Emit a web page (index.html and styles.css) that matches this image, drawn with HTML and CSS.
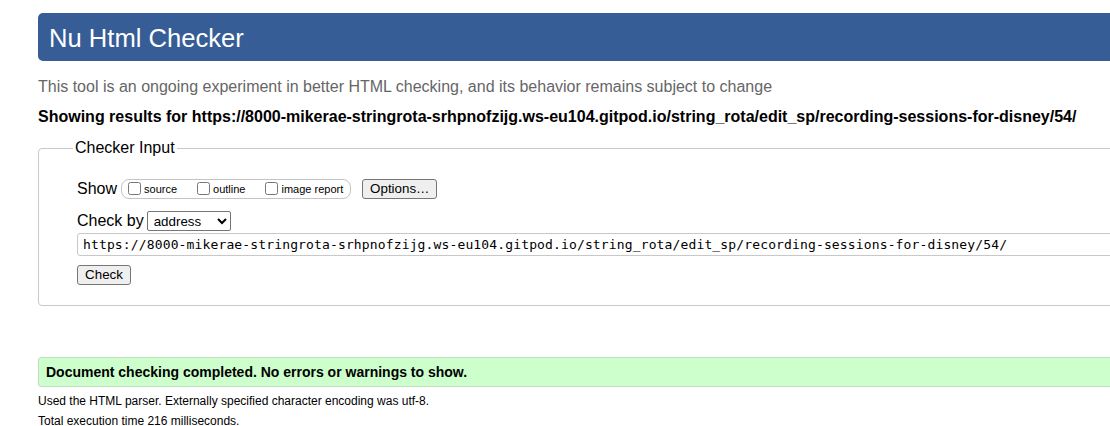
FILE: index.html
```html
<!DOCTYPE html>
<html lang="en">
<head>
<meta charset="utf-8">
<title>Showing results for https://8000-mikerae-stringrota-srhpnofzijg.ws-eu104.gitpod.io/string_rota/edit_sp/recording-sessions-for-disney/54/ - Nu Html Checker</title>
<link rel="stylesheet" href="styles.css">
</head>
<body>
<div class="page">
  <h1 class="title">Nu Html Checker</h1>
  <p class="subtitle">This tool is an ongoing experiment in better HTML checking, and its behavior remains subject to change</p>
  <p class="results">Showing results for https://8000-mikerae-stringrota-srhpnofzijg.ws-eu104.gitpod.io/string_rota/edit_sp/recording-sessions-for-disney/54/</p>
  <form class="form">
    <fieldset class="fieldset">
      <legend class="legend">Checker Input</legend>
      <div class="row row-show">
        <span class="label">Show</span>
        <span class="group">
          <label class="opt"><input type="checkbox" class="cb"><span>source</span></label>
          <label class="opt"><input type="checkbox" class="cb"><span>outline</span></label>
          <label class="opt"><input type="checkbox" class="cb"><span>image report</span></label>
        </span>
        <button type="button" class="btn btn-options">Options…</button>
      </div>
      <div class="row row-by">
        <span class="label">Check by</span>
        <select class="select">
          <option>address</option>
          <option>file upload</option>
          <option>text input</option>
        </select>
      </div>
      <div class="row row-url">
        <input class="url" type="text" value="https://8000-mikerae-stringrota-srhpnofzijg.ws-eu104.gitpod.io/string_rota/edit_sp/recording-sessions-for-disney/54/">
      </div>
      <div class="row row-check">
        <button type="button" class="btn btn-check">Check</button>
      </div>
    </fieldset>
  </form>
  <p class="success">Document checking completed. No errors or warnings to show.</p>
  <p class="details">Used the HTML parser. Externally specified character encoding was utf-8.</p>
  <p class="details">Total execution time 216 milliseconds.</p>
</div>
</body>
</html>
```
FILE: styles.css
```css
html, body {
  margin: 0;
  padding: 0;
  overflow: hidden;
  background: #fff;
}
body {
  font-family: "Liberation Sans", Arial, Helvetica, sans-serif;
  color: #000;
}
.page {
  width: 1120px;
  padding: 13px 0 0 38px;
}
.title {
  margin: 0;
  height: 48px;
  line-height: 50px;
  padding: 0 11px;
  background: #365d95;
  color: #fff;
  font-size: 25.6px;
  font-weight: normal;
  border-radius: 5px 0 0 5px;
}
.subtitle {
  margin: 16px 0 0;
  font-size: 16px;
  line-height: 20px;
  color: #666;
}
.results {
  margin: 10px 0 0;
  font-size: 16px;
  line-height: 20px;
  font-weight: bold;
  white-space: nowrap;
}
.form {
  margin: 11px 0 0;
}
.fieldset {
  margin: 0;
  padding: 20px 0 20px 38px;
  border: 1px solid #c9c9c9;
  border-radius: 4px;
  min-width: 0;
}
.legend {
  padding: 0 2px;
  margin-left: -4px;
  font-size: 16px;
  line-height: 20px;
}
.row {
  display: flex;
  align-items: center;
}
.label {
  font-size: 16px;
  line-height: 20px;
}
.row-show {
  height: 21px;
}
.group {
  display: flex;
  align-items: center;
  height: 18px;
  margin-left: 4px;
  padding: 0 7px 0 6px;
  border: 1px solid #c4c4c4;
  border-radius: 8px;
}
.opt {
  display: flex;
  align-items: center;
  gap: 3px;
  font-size: 11px;
  margin-right: 20px;
}
.opt:last-child {
  margin-right: 0;
}
.cb {
  margin: 0;
  width: 13px;
  height: 13px;
}
.btn {
  font-family: "Liberation Sans", Arial, sans-serif;
  font-size: 13.33px;
  height: 20px;
  padding: 0 6px;
  background: #efefef;
  border: 1px solid #767676;
  border-radius: 3px;
  color: #000;
  line-height: 18px;
}
.btn-options {
  margin-left: 11px;
  width: 75px;
}
.row-by {
  margin-top: 12px;
  height: 20px;
}
.select {
  margin-left: 3px;
  width: 84px;
  height: 20px;
  font-family: "Liberation Sans", Arial, sans-serif;
  font-size: 13.33px;
  border: 1px solid #767676;
  border-radius: 2px;
  background: #fff;
  padding: 0 0 0 2px;
}
.row-url {
  margin-top: 2px;
}
.url {
  width: 1100px;
  height: 23px;
  box-sizing: border-box;
  margin: 0;
  padding: 0 5px 1px;
  border: 1px solid #c8c8c8;
  border-radius: 3px;
  font-family: "DejaVu Sans Mono", Menlo, monospace;
  font-size: 13px;
  letter-spacing: 0.14px;
  line-height: normal;
  color: #000;
}
.row-check {
  margin-top: 9px;
}
.btn-check {
  width: 54px;
}
.success {
  margin: 51px 0 0;
  height: 28px;
  line-height: 28px;
  padding: 0 7px;
  background: #ccffcc;
  border: 1px solid #c2dcc2;
  border-radius: 3px;
  font-size: 14px;
  font-weight: bold;
}
.details {
  margin: 7px 0 0;
  font-size: 12px;
  line-height: 14px;
}
.details + .details {
  margin-top: 6px;
}
```
